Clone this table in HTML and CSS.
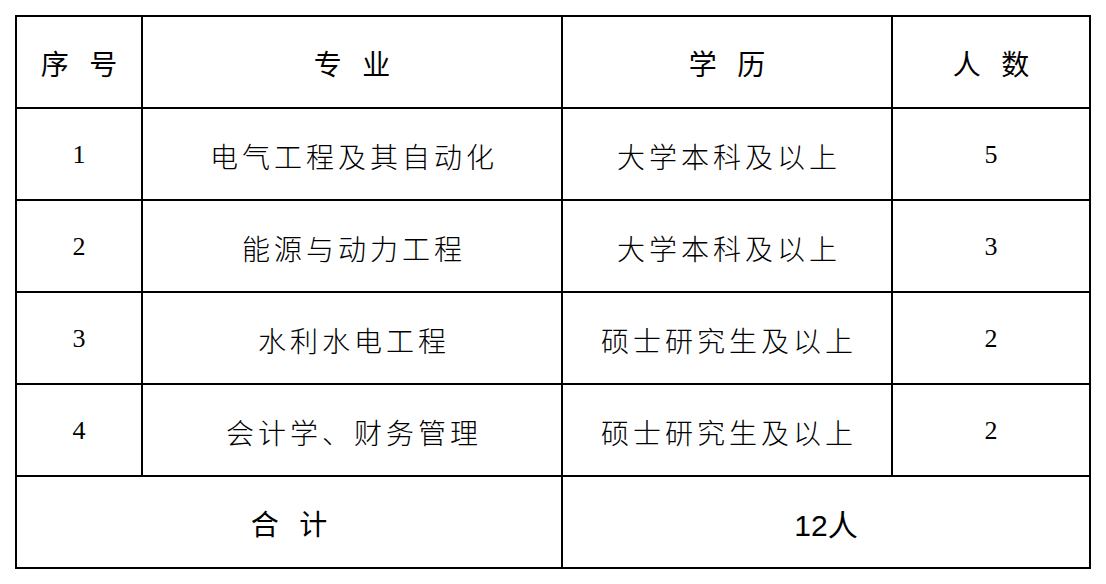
FILE: index.html
```html
<!DOCTYPE html>
<html lang="zh-CN">
<head>
<meta charset="utf-8">
<title>招聘计划</title>
<link rel="stylesheet" href="styles.css">
</head>
<body>
<div class="page">
  <div class="table">
    <div class="cell hd">序 号</div>
    <div class="cell hd">专 业</div>
    <div class="cell hd">学 历</div>
    <div class="cell hd">人 数</div>

    <div class="cell num">1</div>
    <div class="cell txt">电气工程及其自动化</div>
    <div class="cell txt">大学本科及以上</div>
    <div class="cell num">5</div>

    <div class="cell num">2</div>
    <div class="cell txt">能源与动力工程</div>
    <div class="cell txt">大学本科及以上</div>
    <div class="cell num">3</div>

    <div class="cell num">3</div>
    <div class="cell txt">水利水电工程</div>
    <div class="cell txt">硕士研究生及以上</div>
    <div class="cell num">2</div>

    <div class="cell num">4</div>
    <div class="cell txt">会计学、财务管理</div>
    <div class="cell txt">硕士研究生及以上</div>
    <div class="cell num">2</div>

    <div class="cell hd span2">合 计</div>
    <div class="cell total span2">12人</div>
  </div>
</div>
</body>
</html>
```

FILE: styles.css
```css
html, body {
  margin: 0;
  padding: 0;
  background: #ffffff;
}

.page {
  padding: 15px;
}

.table {
  display: grid;
  grid-template-columns: 124px 418px 328px 196px;
  grid-auto-rows: 90px;
  gap: 2px;
  padding: 2px;
  width: 1072px;
  background: #000000;
}

.cell {
  background: #ffffff;
  display: flex;
  align-items: center;
  justify-content: center;
  color: #000000;
  white-space: nowrap;
}

.span2 {
  grid-column: span 2;
}

.hd {
  font-family: "Noto Sans CJK SC", sans-serif;
  font-size: 28px;
  font-weight: 400;
  word-spacing: 14px;
  padding-top: 2px;
}

.txt {
  font-family: "Noto Sans CJK SC", sans-serif;
  font-size: 28px;
  font-weight: 300;
  letter-spacing: 4px;
  padding-left: 4px;
  padding-top: 4px;
}

.num {
  font-family: "Liberation Serif", serif;
  font-size: 26px;
  padding-top: 2px;
}

.total {
  font-family: "Liberation Sans", "Noto Sans CJK SC", sans-serif;
  font-size: 30px;
  padding-top: 2px;
}
```
